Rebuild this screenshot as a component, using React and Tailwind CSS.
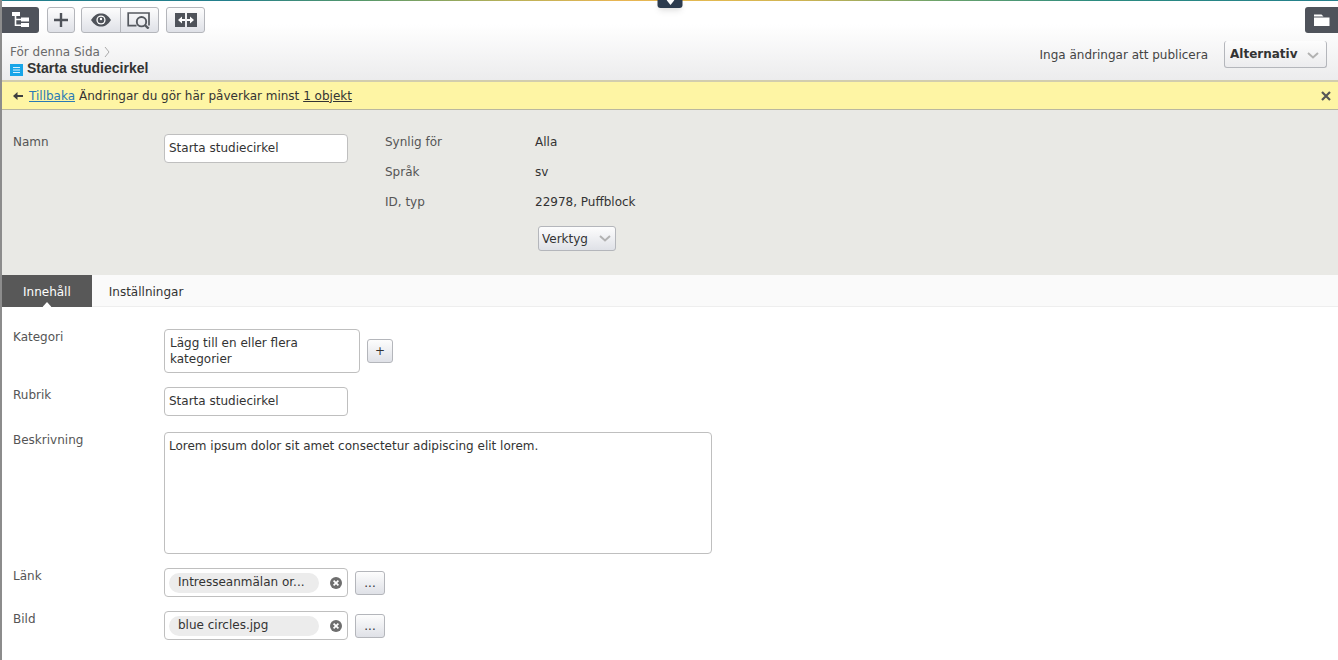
import { useState } from 'react'

const buttonLook = 'border border-[#b4b6bb] rounded-[3px] bg-linear-to-b from-[#fdfdfd] to-[#dfe1e7]'
const fieldLook = 'border border-[#bfbfbf] rounded-[4px] bg-white text-[#333]'

function Chevron({ className }) {
  return (
    <svg className={className} width="12" height="7" viewBox="0 0 12 7" fill="none" stroke="#b2b2b2" strokeWidth="2">
      <path d="M1 1l5 4.5L11 1" />
    </svg>
  )
}

function TreeIcon() {
  return (
    <svg width="18" height="16" viewBox="0 0 18 16" fill="#fff">
      <rect x="0" y="0" width="8" height="4" />
      <rect x="9" y="5.5" width="8" height="4" />
      <rect x="9" y="11" width="8" height="4" />
      <path d="M3.500 4v9.200H9M3.500 7.500H9" fill="none" stroke="#fff" strokeWidth="1.600" />
    </svg>
  )
}

function PlusIcon() {
  return (
    <svg width="14" height="14" viewBox="0 0 14 14" stroke="#4f535a" strokeWidth="2.400">
      <path d="M7 0v14M0 7h14" />
    </svg>
  )
}

function EyeIcon() {
  return (
    <svg width="20" height="14" viewBox="0 0 20 14">
      <path d="M0 7C3 2.400 6 .5 10 .5S17 2.400 20 7c-3 4.600-6 6.500-10 6.500S3 11.600 0 7z" fill="#4f535a" />
      <circle cx="10" cy="7" r="4.600" fill="#fff" />
      <circle cx="10" cy="7" r="3.300" fill="#4f535a" />
      <circle cx="10" cy="6" r="1.200" fill="#fff" />
    </svg>
  )
}

function PreviewIcon() {
  return (
    <svg width="24" height="18" viewBox="0 0 24 18" fill="none" stroke="#55595f">
      <path d="M9.500 14.700H1.200V2H22v12.500" strokeWidth="1.700" />
      <circle cx="14.500" cy="10.700" r="4.700" strokeWidth="1.900" />
      <path d="M17.800 14l3.800 3.600" strokeWidth="2.400" />
    </svg>
  )
}

function SplitIcon() {
  return (
    <svg width="22" height="14" viewBox="0 0 22 14">
      <path d="M0 0h10v14H0zM12 0h10v14H12z" fill="#4f535a" />
      <path d="M3 7l4-3.500V6h3v2H7v2.500zM19 7l-4-3.500V6h-3v2h3v2.500z" fill="#fff" />
    </svg>
  )
}

function FolderIcon() {
  return (
    <svg width="16" height="13" viewBox="0 0 16 13" fill="#fff">
      <path d="M0 .5h7.500l2 2H0zM0 3.500h15.500V12H0z" />
    </svg>
  )
}

function Dropdown({ label, className, chevron }) {
  return (
    <div className="relative w-fit">
      <select aria-label={label} className={`block appearance-none text-[#333] ${className}`}>
        <option>{label}</option>
      </select>
      <Chevron className={`absolute pointer-events-none ${chevron}`} />
    </div>
  )
}

function Row({ label, id, className, children }) {
  return (
    <div className={`flex items-start ${className || ''}`}>
      <label htmlFor={id} className="w-[151px] shrink-0">{label}</label>
      {children}
    </div>
  )
}

function PickerField({ id, value, onClear }) {
  return (
    <>
      <div className={`flex items-center justify-between w-[184px] h-[29px] pl-1 pr-[5px] ${fieldLook}`}>
        <input
          id={id}
          readOnly
          value={value}
          className="w-[150px] h-5 px-[9px] pb-0.5 rounded-full bg-[#ececec] outline-none"
        />
        <button type="button" aria-label="Rensa" onClick={onClear}>
          <svg width="12" height="12" viewBox="0 0 12 12">
            <circle cx="6" cy="6" r="6" fill="#6e6e6e" />
            <path d="M3.600 3.600l4.800 4.800M8.400 3.600L3.600 8.400" stroke="#fff" strokeWidth="1.700" />
          </svg>
        </button>
      </div>
      <button type="button" className={`w-[30px] h-6 mt-[3px] ml-[7px] text-[#333] ${buttonLook}`}>...</button>
    </>
  )
}

export default function App() {
  const [tab, setTab] = useState('Innehåll')
  const [name, setName] = useState('Starta studiecirkel')
  const [heading, setHeading] = useState('Starta studiecirkel')
  const [text, setText] = useState('Lorem ipsum dolor sit amet consectetur adipiscing elit lorem.')
  const [link, setLink] = useState('Intresseanmälan or...')
  const [image, setImage] = useState('blue circles.jpg')

  return (
    <div className="min-h-screen border-l-2 border-[#8c8c8c] bg-white text-[12px] leading-4 text-[#555] font-['Verdana','DejaVu_Sans',sans-serif]">
      <header className="relative bg-linear-to-b from-white from-30% to-[#ececed] border-b-2 border-[#d2cdae]">
        <div className="h-px bg-[linear-gradient(90deg,#237f8c_0%,#237f8c_17%,#56986a_27%,#b9b158_38%,#e8b553_46%,#e0b950_54%,#cdb353_60%,#6da36a_70%,#2b8b80_82%,#237f8c_100%)]" />
        <button
          type="button"
          aria-label="Visa meny"
          className="absolute top-0 left-1/2 -translate-x-1/2 w-[25px] h-2 flex justify-center bg-[#2c3b4e] rounded-b-[3px] shadow-md"
        >
          <svg width="8" height="5" viewBox="0 0 8 5" fill="#fff"><path d="M0 0h8L4 5z" /></svg>
        </button>

        <div className="flex items-start pt-1.5">
          <button type="button" aria-label="Sidträd" className="flex items-center justify-center w-[37px] h-[26px] bg-[#4f535b] rounded-r-[3px]">
            <TreeIcon />
          </button>
          <button type="button" aria-label="Lägg till" className={`flex items-center justify-center w-7 h-[26px] ml-2 ${buttonLook}`}>
            <PlusIcon />
          </button>
          <div className={`flex w-[78px] h-[26px] ml-[6px] ${buttonLook}`}>
            <button type="button" aria-label="Visa" className="flex flex-1 items-center justify-center border-r border-[#b4b6bb]">
              <EyeIcon />
            </button>
            <button type="button" aria-label="Förhandsgranska" className="flex flex-1 items-center justify-center">
              <PreviewIcon />
            </button>
          </div>
          <button type="button" aria-label="Jämför" className={`flex items-center justify-center w-[39px] h-[26px] ml-[7px] ${buttonLook}`}>
            <SplitIcon />
          </button>
          <button type="button" aria-label="Filer" className="flex items-center justify-center w-[33px] h-[26px] ml-auto bg-[#4f535b] rounded-l-[3px]">
            <FolderIcon />
          </button>
        </div>

        <div className="flex items-start justify-between pl-2 pr-[11px] pt-2 pb-1">
          <div className="pt-[3px]">
            <div className="flex items-center gap-1">
              <a href="#sida" className="text-[#6a6a6a]">För denna Sida</a>
              <svg width="6" height="12" viewBox="0 0 6 12" fill="none" stroke="#aaa"><path d="M1 1l4 5-4 5" /></svg>
            </div>
            <h1 className="flex items-center gap-1 font-['Helvetica','Liberation_Sans',sans-serif] text-[14px] leading-4 font-bold text-[#333]">
              <svg className="mt-1" width="13" height="12" viewBox="0 0 13 12">
                <path d="M0 0h13v12H0z" fill="#18a5e8" />
                <path d="M3 3.500h7M3 6h7M3 8.500h7" stroke="#d8f1ff" />
              </svg>
              Starta studiecirkel
            </h1>
          </div>
          <div className="flex items-center gap-4 text-[#444]">
            <span>Inga ändringar att publicera</span>
            <Dropdown
              label="Alternativ"
              className="w-[103px] h-[27px] pl-[5px] font-bold border border-t-0 border-[#b4b6bb] rounded-[3px] bg-linear-to-b from-[#fdfdfd] to-[#ececee]"
              chevron="right-2 top-[11px]"
            />
          </div>
        </div>
      </header>

      <div className="flex items-center h-7 pl-[11px] pr-[7px] bg-[#fef5a4] border-b border-[#b9b7a0] text-[#333]">
        <svg width="10" height="8" viewBox="0 0 10 8" fill="#3f3f3f"><path d="M0 4l4.500-4v3H10v2H4.500v3z" /></svg>
        <a href="#tillbaka" className="ml-[6px] mr-1 underline text-[#2a7ab5]">Tillbaka</a>
        <span>Ändringar du gör här påverkar minst <a href="#objekt" className="underline">1 objekt</a></span>
        <button type="button" aria-label="Stäng" className="ml-auto">
          <svg width="10" height="10" viewBox="0 0 10 10" stroke="#555" strokeWidth="2.200"><path d="M1 1l8 8M9 1L1 9" /></svg>
        </button>
      </div>

      <section className="flex items-start pl-[11px] pt-6 pb-6 bg-[#e9e9e5]">
        <Row label="Namn" id="name">
          <input
            id="name"
            value={name}
            onChange={(e) => setName(e.target.value)}
            className={`w-[184px] h-[29px] px-1 pb-0.5 ${fieldLook}`}
          />
        </Row>
        <dl className="grid grid-cols-[150px_auto] gap-y-[14px] ml-[37px]">
          <dt>Synlig för</dt>
          <dd className="text-[#333]">Alla</dd>
          <dt>Språk</dt>
          <dd className="text-[#333]">sv</dd>
          <dt>ID, typ</dt>
          <dd className="text-[#333]">22978, Puffblock</dd>
          <dd className="col-start-2 pt-0.5 pl-[3px]">
            <Dropdown label="Verktyg" className={`w-[78px] h-[25px] pl-[3px] ${buttonLook}`} chevron="right-[5px] top-[9px]" />
          </dd>
        </dl>
      </section>

      <nav className="flex h-8 bg-[#fafafa] border-b border-[#eee]" role="tablist">
        {['Innehåll', 'Inställningar'].map((t) => (
          <button
            key={t}
            type="button"
            role="tab"
            aria-selected={tab === t}
            onClick={() => setTab(t)}
            className={`relative h-8 pt-0.5 ${tab === t ? 'px-[21px] bg-[#585858] text-white' : 'px-[17px] text-[#333]'}`}
          >
            {t}
            {tab === t && (
              <svg className="absolute bottom-0 left-1/2 -translate-x-1/2" width="9" height="5" viewBox="0 0 9 5" fill="#fff">
                <path d="M0 5l4.500-5L9 5z" />
              </svg>
            )}
          </button>
        ))}
      </nav>

      <form className="flex flex-col gap-[14px] pl-[11px] pt-[22px] pb-5" onSubmit={(e) => e.preventDefault()}>
        <div className="flex items-start">
          <span className="w-[151px] shrink-0">Kategori</span>
          <div className={`w-[196px] p-[5px] ${fieldLook}`}>Lägg till en eller flera kategorier</div>
          <button type="button" aria-label="Lägg till kategori" className={`self-center w-[26px] h-6 ml-[7px] text-[#333] ${buttonLook}`}>+</button>
        </div>
        <Row label="Rubrik" id="heading">
          <input
            id="heading"
            value={heading}
            onChange={(e) => setHeading(e.target.value)}
            className={`w-[184px] h-[29px] px-1 pb-0.5 ${fieldLook}`}
          />
        </Row>
        <Row label="Beskrivning" id="text" className="pt-0.5">
          <textarea
            id="text"
            value={text}
            onChange={(e) => setText(e.target.value)}
            className={`w-[548px] h-[122px] px-1 py-[5px] resize-none ${fieldLook}`}
          />
        </Row>
        <Row label="Länk" id="link">
          <PickerField id="link" value={link} onClear={() => setLink('')} />
        </Row>
        <Row label="Bild" id="image">
          <PickerField id="image" value={image} onClear={() => setImage('')} />
        </Row>
      </form>
    </div>
  )
}
